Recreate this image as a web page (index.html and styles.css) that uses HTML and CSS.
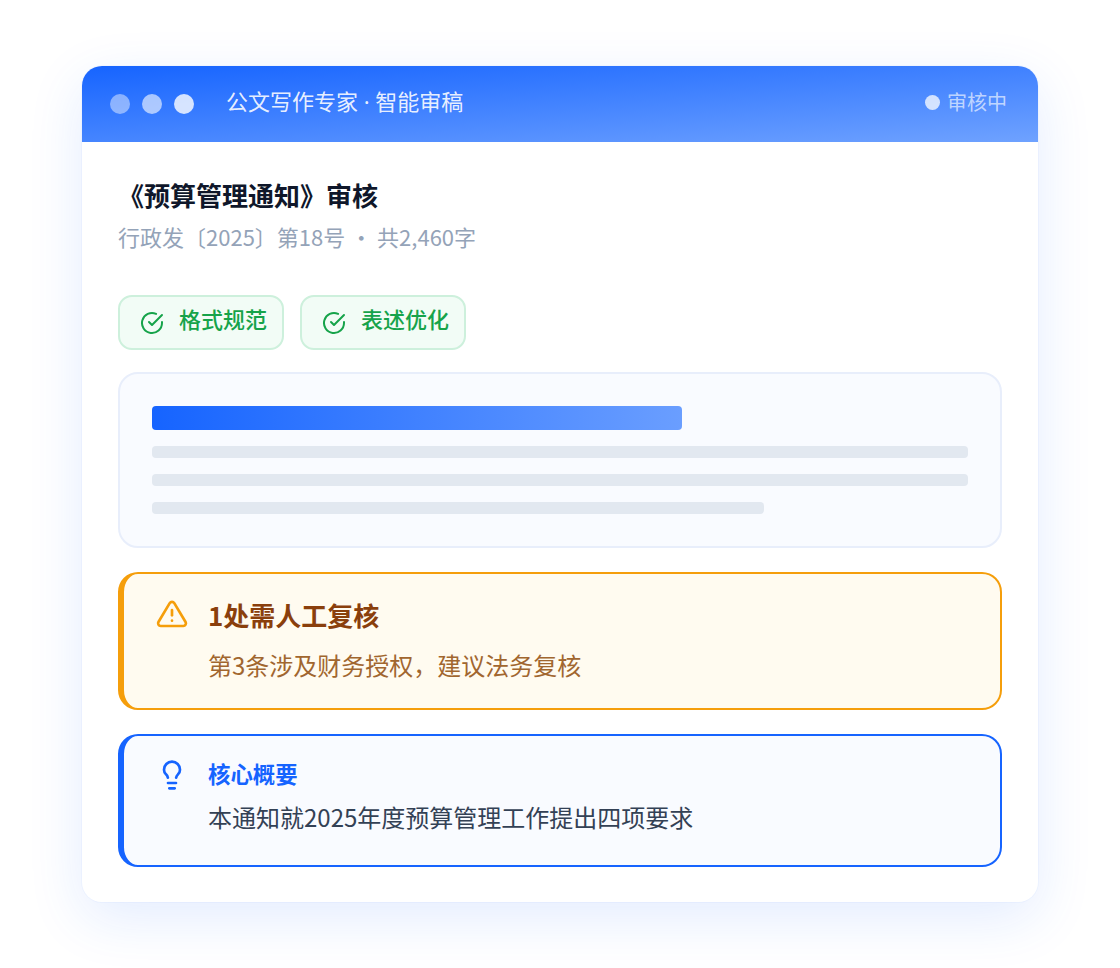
FILE: index.html
```html
<!DOCTYPE html>
<html lang="zh-CN">
<head>
    <meta charset="UTF-8">
    <meta name="viewport" content="width=device-width, initial-scale=1.0">
    <title>公文写作专家 · 智能审稿</title>
    <link rel="stylesheet" href="styles.css">
</head>
<body>

<div class="card">
    <!-- Window bar -->
    <header class="bar">
        <div class="dots">
            <span class="dot dot-1"></span>
            <span class="dot dot-2"></span>
            <span class="dot dot-3"></span>
        </div>
        <div class="bar-title">公文写作专家 · 智能审稿</div>
        <div class="status"><span class="status-dot"></span><span class="status-text">审核中</span></div>
    </header>

    <div class="content">
        <h1 class="doc-title">《预算管理通知》审核</h1>
        <p class="doc-meta">行政发〔2025〕第18号 · 共2,460字</p>

        <div class="tags">
            <div class="tag">
                <svg class="tag-icon" viewBox="0 0 24 24" fill="none" stroke="currentColor" stroke-width="2" stroke-linecap="round" stroke-linejoin="round"><path d="M22 11.08V12a10 10 0 1 1-5.93-9.14"/><path d="M22 4 12 14.01l-3-3"/></svg>
                <span>格式规范</span>
            </div>
            <div class="tag">
                <svg class="tag-icon" viewBox="0 0 24 24" fill="none" stroke="currentColor" stroke-width="2" stroke-linecap="round" stroke-linejoin="round"><path d="M22 11.08V12a10 10 0 1 1-5.93-9.14"/><path d="M22 4 12 14.01l-3-3"/></svg>
                <span>表述优化</span>
            </div>
        </div>

        <!-- Document preview -->
        <div class="preview">
            <div class="line-head"></div>
            <div class="line"></div>
            <div class="line"></div>
            <div class="line line-short"></div>
        </div>

        <div class="notice notice-warn">
            <svg class="notice-icon" viewBox="0 0 24 24" fill="none" stroke="currentColor" stroke-width="2" stroke-linecap="round" stroke-linejoin="round"><path d="M10.29 3.86 1.82 18a2 2 0 0 0 1.71 3h16.94a2 2 0 0 0 1.71-3L13.71 3.86a2 2 0 0 0-3.42 0z"/><path d="M12 9v4"/><path d="M12 17h.01"/></svg>
            <div class="notice-text">
                <div class="warn-title">1处需人工复核</div>
                <div class="warn-desc">第3条涉及财务授权，建议法务复核</div>
            </div>
        </div>

        <div class="notice notice-info">
            <svg class="notice-icon" viewBox="0 0 24 24" fill="none" stroke="currentColor" stroke-width="2" stroke-linecap="round" stroke-linejoin="round"><path d="M9 18h6"/><path d="M10 22h4"/><path d="M15.09 14c.18-.98.65-1.74 1.41-2.5A4.65 4.65 0 0 0 18 8 6 6 0 0 0 6 8c0 1 .23 2.23 1.5 3.5A4.61 4.61 0 0 1 8.91 14"/></svg>
            <div class="notice-text">
                <div class="info-title">核心概要</div>
                <div class="info-desc">本通知就2025年度预算管理工作提出四项要求</div>
            </div>
        </div>
    </div>
</div>

</body>
</html>
```

FILE: styles.css
```css
body {
    margin: 0;
    padding: 66px 82px;
    background-color: #ffffff;
    font-family: "Noto Sans CJK SC", "Noto Sans", sans-serif;
}
.card {
    width: 956px;
    height: 836px;
    background-color: #fff;
    border-radius: 20px;
    overflow: hidden;
    box-shadow: 0 16px 56px rgba(22, 100, 255, 0.12), 0 0 0 1px rgba(22, 100, 255, 0.03);
}
.bar {
    display: flex;
    align-items: center;
    height: 76px;
    padding: 0 31px 0 28px;
    background: linear-gradient(176deg, #1664ff, #6fa2ff);
}
.dots {
    display: flex;
    gap: 12px;
    margin-right: 32px;
}
.dot {
    width: 20px;
    height: 20px;
    border-radius: 50%;
    background-color: #fff;
}
.dot-1 { opacity: 0.45; }
.dot-2 { opacity: 0.6; }
.dot-3 { opacity: 0.8; }
.bar-title {
    flex: 1;
    margin-bottom: 7px;
    color: rgba(255, 255, 255, 0.9);
    font-family: "Noto Sans", "Noto Sans CJK SC", sans-serif;
    font-size: 22px;
    line-height: 32px;
}
.status {
    display: flex;
    align-items: center;
    gap: 8px;
    margin-bottom: 3px;
    color: rgba(255, 255, 255, 0.65);
    font-size: 20px;
}
.status-text {
    margin-bottom: 2px;
}
.status-dot {
    width: 15px;
    height: 15px;
    margin-right: -1px;
    border-radius: 50%;
    background-color: #fff;
    opacity: 0.75;
}
.content {
    padding: 34px 36px;
}
.doc-title {
    margin: 0;
    color: #0f172a;
    font-size: 26px;
    font-weight: 700;
    line-height: 38px;
}
.doc-meta {
    margin: 6px 0 0;
    color: #94a3b8;
    font-size: 22px;
    line-height: 32px;
}
.tags {
    display: flex;
    gap: 16px;
    margin-top: 43px;
}
.tag {
    display: flex;
    align-items: center;
    gap: 15px;
    height: 51px;
    padding: 0 15px 0 20px;
    background-color: #f2fcf6;
    border: 2px solid #cdf0dc;
    border-radius: 14px;
    color: #16a34a;
    font-size: 22px;
    font-weight: 500;
}
.tag span {
    margin-bottom: 10px;
}
.tag-icon {
    width: 24px;
    height: 24px;
}
.preview {
    margin-top: 22px;
    padding: 32px;
    height: 108px;
    background-color: #f9fbff;
    border: 2px solid #e8eefb;
    border-radius: 20px;
}
.line-head {
    width: 65%;
    height: 24px;
    margin-bottom: 16px;
    border-radius: 4px;
    background: linear-gradient(90deg, #1664ff, #6a9eff);
}
.line {
    height: 12px;
    margin-bottom: 16px;
    border-radius: 4px;
    background-color: #e2e8f0;
}
.line-short {
    width: 75%;
    margin-bottom: 0;
}
.notice {
    display: flex;
    margin-top: 24px;
    border-radius: 20px;
    border-style: solid;
    border-width: 2px 2px 2px 6px;
    box-sizing: border-box;
}
.notice-warn {
    height: 138px;
    padding: 22px 32px;
    background-color: #fffbf0;
    border-color: #f59e0b;
    color: #f59e0b;
}
.notice-info {
    height: 133px;
    padding: 21px 32px;
    background-color: #f9fbff;
    border-color: #1664ff;
    color: #1664ff;
}
.notice-icon {
    flex: none;
    width: 32px;
    height: 32px;
    margin-top: 2px;
    margin-right: 20px;
}
.warn-title {
    color: #8a3f0c;
    font-size: 26px;
    font-weight: 700;
    line-height: 38px;
}
.warn-desc {
    margin-top: 13px;
    color: #a1662f;
    font-size: 24px;
    line-height: 36px;
}
.info-title {
    color: #1664ff;
    font-size: 22.4px;
    font-weight: 700;
    line-height: 32px;
}
.info-desc {
    margin-top: 10px;
    color: #334155;
    font-size: 24px;
    line-height: 36px;
}
```
